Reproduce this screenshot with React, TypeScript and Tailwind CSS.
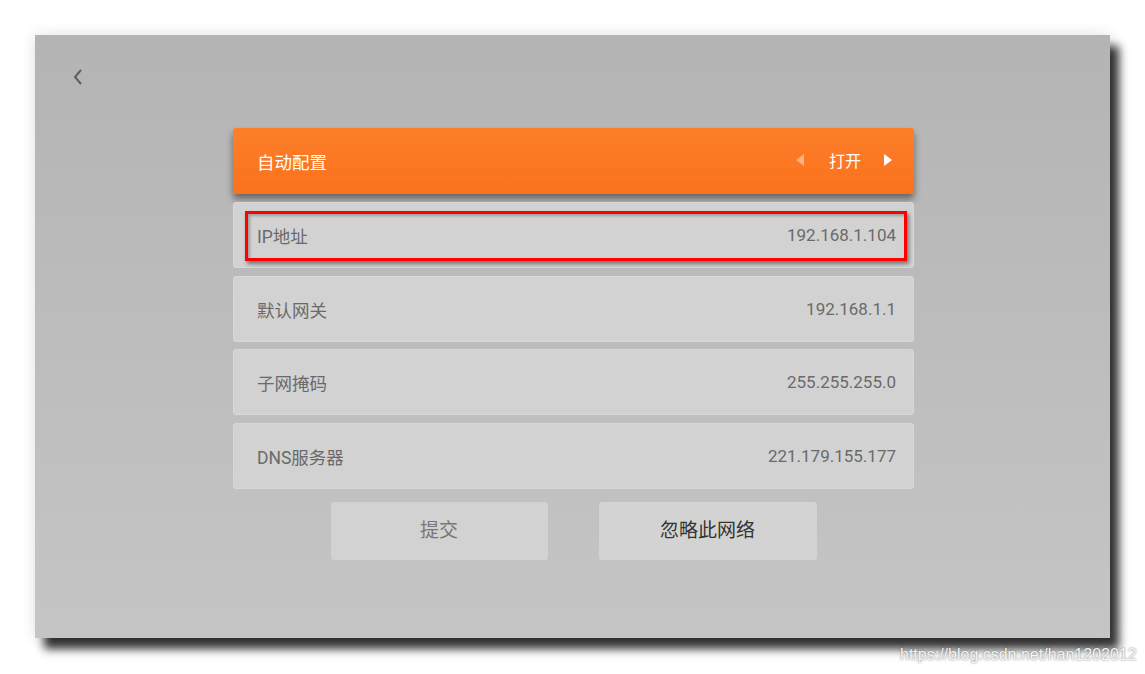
const rows = [
  { label: 'IP地址', value: '192.168.1.104', marked: true, mt: 'mt-[8px]' },
  { label: '默认网关', value: '192.168.1.1', mt: 'mt-[8px]' },
  { label: '子网掩码', value: '255.255.255.0', mt: 'mt-[7px]' },
  { label: 'DNS服务器', value: '221.179.155.177', mt: 'mt-[8px]' },
];

const font = { fontFamily: 'Roboto, "Noto Sans CJK SC", sans-serif' };

export default function App() {
  return (
    <div className="w-[1145px] h-[674px] bg-white relative pt-[35px] pl-[35px]" style={font}>
      {/* Screen */}
      <div className="w-[1075px] h-[603px] flex flex-col bg-gradient-to-b from-[#b4b4b4] to-[#c6c5c6] shadow-[9px_11px_9px_rgba(0,0,0,0.8),0_0_14px_rgba(0,0,0,0.12)]">
        {/* Back */}
        <div className="h-[93px] pl-[37px] pt-[33px]">
          <svg width="12" height="18" viewBox="0 0 12 18" fill="none">
            <path d="M9 2 L3 9 L9 16" stroke="#5e5e5e" strokeWidth="2" />
          </svg>
        </div>

        <div className="w-[681px] ml-[198px] flex flex-col">
          {/* Auto config */}
          <div className="h-[66px] rounded-[3px] bg-gradient-to-b from-[#fd7f2a] to-[#fb711c] shadow-[0_5px_7px_rgba(0,0,0,0.45)] flex items-center pl-[24px] pr-[22px] text-white">
            <span className="flex-1 pt-[5px] text-[17.5px]">自动配置</span>
            <svg width="8" height="12" viewBox="0 0 8 12" className="mr-[25px] mt-[-2px]">
              <path d="M8 0 L0 6 L8 12 Z" fill="#fdb080" />
            </svg>
            <span className="text-[16px] pt-[2px]">打开</span>
            <svg width="8" height="12" viewBox="0 0 8 12" className="ml-[23px] mt-[-2px]">
              <path d="M0 0 L8 6 L0 12 Z" fill="#ffffff" />
            </svg>
          </div>

          {/* Rows */}
          <div className="flex flex-col">
            {rows.map((r) => (
              <div
                key={r.label}
                className={`${r.mt} relative h-[66px] rounded-[3px] bg-[#d2d2d2] border border-[#d8d8d8] flex items-center justify-between pl-[23px] pr-[17px] text-[#6a6a6a]`}
              >
                <span className="pt-[5px] text-[17.5px]">{r.label}</span>
                <span className="pt-[2px] text-[17px]">{r.value}</span>
                {r.marked && (
                  <div className="absolute left-[11px] top-[8px] w-[662px] h-[50px] border-[3px] border-[#ff0000] shadow-[2px_3px_4px_rgba(0,0,0,0.45),inset_2px_2px_3px_rgba(0,0,0,0.25)]" />
                )}
              </div>
            ))}
          </div>

          {/* Buttons */}
          <div className="flex justify-center gap-[51px] mt-[13px]">
            <div className="w-[217px] h-[58px] rounded-[3px] bg-[#d2d2d2] flex items-center justify-center text-[19px] text-[#777777]">
              提交
            </div>
            <div className="w-[218px] h-[58px] rounded-[3px] bg-[#d3d3d3] flex items-center justify-center text-[19px] text-[#333333]">
              忽略此网络
            </div>
          </div>
        </div>
      </div>

      {/* Watermark */}
      <div
        className="absolute left-[900px] top-[643px] text-[16px] text-[#f4f4f4] [text-shadow:0_0_2px_rgba(0,0,0,0.55)]"
        style={{ fontFamily: '"Liberation Sans", Arial, sans-serif' }}
      >
        https://blog.csdn.net/han1202012
      </div>
    </div>
  );
}
